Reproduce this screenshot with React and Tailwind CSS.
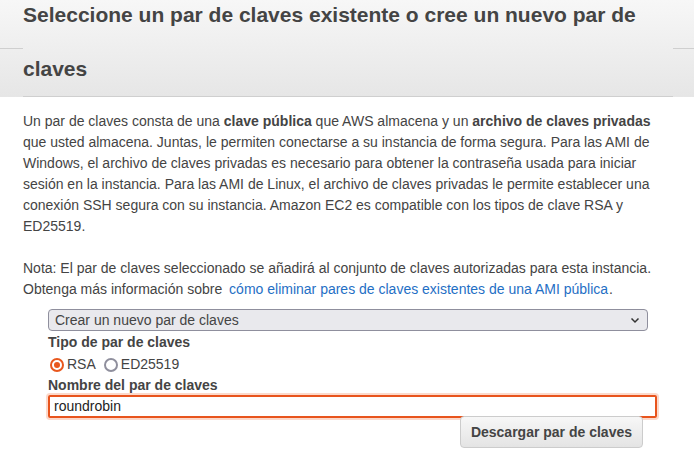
import React from 'react';

const App = () => {
  return (
    <div className="w-[694px] h-[454px] overflow-hidden bg-white text-[#444] font-['Liberation_Sans',Arial,sans-serif]">
      {/* Header */}
      <div className="flex items-start bg-gradient-to-b from-[#f7f7f7] to-[#e6e6e6]">
        <div className="w-[23px] h-[49px] border-b border-[#cfcfcf]" />
        <h2 className="flex-1 mt-[-12px] border-b border-[#cfcfcf] text-[21px] leading-[54px] font-bold font-['Liberation_Sans_Narrow','Liberation_Sans',Arial,sans-serif] text-[#444]">
          Seleccione un par de claves existente o cree un nuevo par de claves
        </h2>
        <div className="w-[21px] h-[49px] border-b border-[#cfcfcf]" />
      </div>

      {/* Body */}
      <div className="pl-[23px] pr-[21px] pt-[14px] text-[14px] leading-[21px]">
        <p>
          Un par de claves consta de una <b>clave pública</b> que AWS almacena y un <b>archivo de claves privadas</b> que usted almacena. Juntas, le permiten conectarse a su instancia de forma segura. Para las AMI de Windows, el archivo de claves privadas es necesario para obtener la contraseña usada para iniciar sesión en la instancia. Para las AMI de Linux, el archivo de claves privadas le permite establecer una conexión SSH segura con su instancia. Amazon EC2 es compatible con los tipos de clave RSA y ED25519.
        </p>
        <p className="mt-[21px]">
          Nota: El par de claves seleccionado se añadirá al conjunto de claves autorizadas para esta instancia. Obtenga más información sobre{' '}
          <a className="pl-[3px] pr-[1px] text-[#1f6fc5]">cómo eliminar pares de claves existentes de una AMI pública</a>.
        </p>

        {/* Form */}
        <div className="pl-[25px] pt-[9px]">
          <div className="w-[600px] h-[22px] flex items-center justify-between px-[6px] bg-[#e9e9ed] border border-[#8f8f9d] rounded-[4px] text-[14px] leading-none">
            <span>Crear un nuevo par de claves</span>
            <svg width="10" height="7" viewBox="0 0 10 7" className="mr-[1px]">
              <path d="M1.5 1.5 L5 5 L8.5 1.5" fill="none" stroke="#333" strokeWidth="1.5" />
            </svg>
          </div>
          <div className="font-bold mt-[1px]">Tipo de par de claves</div>
          <div className="flex items-center h-[21px] mt-[1px]">
            <span className="w-[14px] h-[14px] ml-[2px] rounded-full border-2 border-[#e8571d] flex items-center justify-center">
              <span className="w-[6px] h-[6px] rounded-full bg-[#e8571d]" />
            </span>
            <span className="ml-[3px]">RSA</span>
            <span className="w-[14px] h-[14px] ml-[8px] rounded-full border-2 border-[#8f8f9d]" />
            <span className="ml-[3px]">ED25519</span>
          </div>
          <div className="font-bold">Nombre del par de claves</div>
          <div className="w-[609px] h-[23px] mt-[-1px] flex items-center px-[4px] border-2 border-[#e8541d] rounded-[2px] ring-[2px] ring-[#fcd9cb] text-[#222]">
            roundrobin
          </div>
          <div className="flex justify-end w-[595px] mt-[-2px]">
            <button className="h-[32px] px-[10px] rounded-[4px] border border-[#cccccc] bg-gradient-to-b from-[#f7f7f7] to-[#e4e4e4] font-bold text-[14px] text-[#444]">
              Descargar par de claves
            </button>
          </div>
        </div>
      </div>
    </div>
  );
};

export default App;
